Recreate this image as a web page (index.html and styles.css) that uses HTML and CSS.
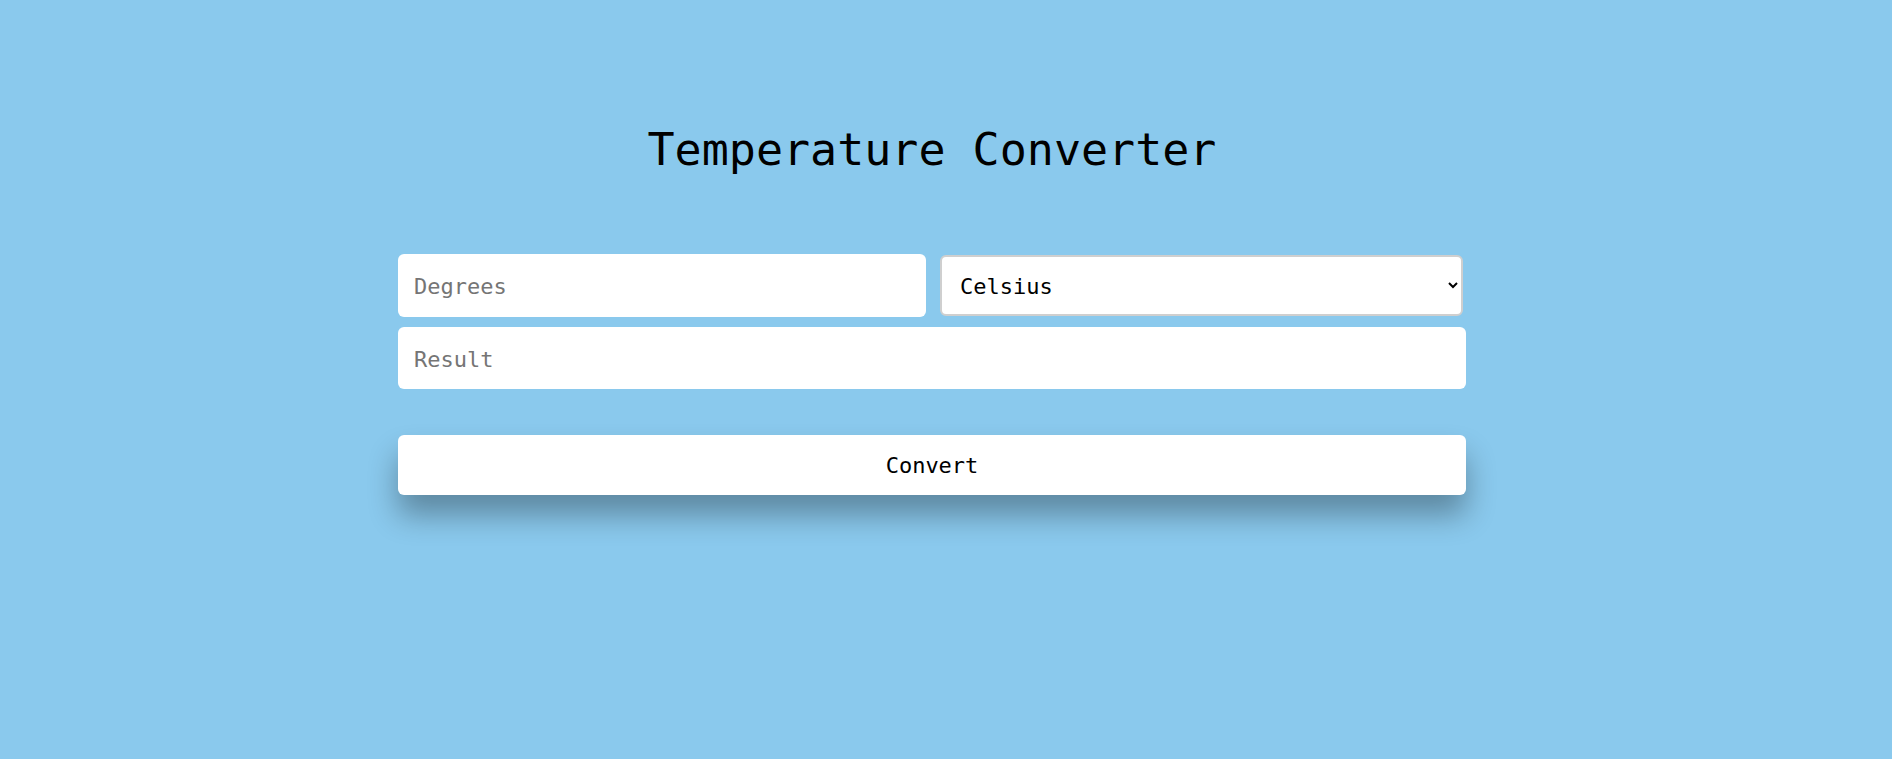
FILE: index.html
```html
<!DOCTYPE html>
<html lang="en">
<head>
<meta charset="utf-8">
<title>Temperature Converter</title>
<link rel="stylesheet" href="styles.css">
</head>
<body>
<main class="converter">
  <h1 class="title">Temperature Converter</h1>
  <form class="form">
    <div class="row">
      <input class="field field-degrees" type="text" placeholder="Degrees">
      <select class="field field-unit">
        <option>Celsius</option>
        <option>Fahrenheit</option>
        <option>Kelvin</option>
      </select>
    </div>
    <input class="field field-result" type="text" placeholder="Result" readonly>
    <button class="convert" type="button">Convert</button>
  </form>
</main>
</body>
</html>
```
FILE: styles.css
```css
html {
  background: #8ac9ed;
}
body {
  margin: 0;
  min-height: 100vh;
  box-sizing: border-box;
  padding-right: 28px;
  font-family: "DejaVu Sans Mono", "Liberation Mono", monospace;
}
.converter {
  width: 1068px;
  margin: 0 auto;
  padding-top: 122px;
  padding-bottom: 80px;
}
.title {
  margin: 0;
  font-size: 45px;
  line-height: 56px;
  font-weight: 400;
  text-align: center;
  color: #000;
}
.form {
  margin-top: 76px;
  display: flex;
  flex-direction: column;
}
.row {
  display: flex;
  align-items: center;
  gap: 14px;
}
.field {
  box-sizing: border-box;
  font-family: inherit;
  font-size: 22px;
  color: #000;
  background: #fff;
  border: none;
  border-radius: 6px;
  outline: none;
}
.field::placeholder {
  color: #757575;
}
.field-degrees {
  flex: 0 0 528px;
  height: 63px;
  padding: 2px 16px 0;
}
.field-unit {
  width: 523px;
  height: 61px;
  padding: 2px 14px 0;
  border: 2px solid #cfcfcf;
}
.field-result {
  margin-top: 10px;
  width: 100%;
  height: 62px;
  padding: 2px 16px 0;
}
.convert {
  margin-top: 46px;
  height: 60px;
  width: 100%;
  padding-top: 2px;
  border: none;
  border-radius: 6px;
  background: #fff;
  color: #000;
  font-family: inherit;
  font-size: 22px;
  box-shadow: 0 20px 30px rgba(0, 0, 0, 0.32);
  cursor: pointer;
}
```
